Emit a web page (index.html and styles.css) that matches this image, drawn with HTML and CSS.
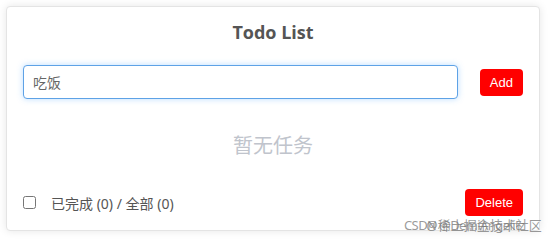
FILE: index.html
```html
<!DOCTYPE html>
<html lang="zh">
<head>
<meta charset="utf-8">
<title>Todo List</title>
<link rel="stylesheet" href="styles.css">
</head>
<body>
<div class="page">
  <div class="card">
    <h1 class="title">Todo List</h1>
    <div class="add-row">
      <input class="todo-input" type="text" value="吃饭">
      <button class="btn">Add</button>
    </div>
    <div class="empty">暂无任务</div>
    <div class="footer">
      <label class="summary">
        <input class="check" type="checkbox">
        <span>已完成 (0) / 全部 (0)</span>
      </label>
      <button class="btn">Delete</button>
    </div>
  </div>
  <div class="watermark">
    <span class="wm wm-a">CSDN @DemiAngelitz</span>
    <span class="wm wm-b">@稀土掘金技术社区</span>
  </div>
</div>
</body>
</html>
```

FILE: styles.css
```css
html, body {
  margin: 0;
  padding: 0;
  background: #ffffff;
}
body {
  font-family: "Noto Sans", "Noto Sans CJK SC", sans-serif;
}
.page {
  position: relative;
  width: 551px;
  height: 244px;
  padding: 6px 0 0 6px;
  box-sizing: border-box;
}
.card {
  width: 534px;
  box-sizing: border-box;
  border: 1px solid #e4e4e4;
  border-radius: 4px;
  background: #fff;
  box-shadow: 0 0 8px rgba(0, 0, 0, 0.1);
  padding: 13px 16px 14px 16px;
}
.title {
  margin: 0 0 21px;
  font-family: "Open Sans", "Noto Sans CJK SC", sans-serif;
  font-size: 18px;
  line-height: 24px;
  font-weight: 700;
  color: #555;
  text-align: center;
}
.add-row {
  display: flex;
  align-items: center;
  gap: 22px;
}
.todo-input {
  flex: 1;
  height: 34px;
  box-sizing: border-box;
  border: 1px solid #5ea2e6;
  border-radius: 4px;
  box-shadow: 0 0 6px rgba(64, 158, 255, 0.35);
  padding: 0 9px;
  font-family: "Noto Sans", "Noto Sans CJK SC", sans-serif;
  font-size: 14px;
  color: #666;
  outline: none;
}
.btn {
  height: 27px;
  padding: 0 10px;
  border: none;
  border-radius: 4px;
  background: #ff0000;
  color: #fff;
  font-family: "Liberation Sans", Arial, sans-serif;
  font-size: 13px;
  line-height: 27px;
  cursor: pointer;
}
.empty {
  margin: 32px 0 30px;
  font-family: "Noto Sans CJK SC", sans-serif;
  font-size: 20px;
  line-height: 28px;
  color: #c0c4cc;
  text-align: center;
}
.footer {
  display: flex;
  align-items: center;
  justify-content: space-between;
}
.summary {
  display: flex;
  align-items: center;
  gap: 15px;
  font-size: 14px;
  color: #555;
}
.check {
  width: 13px;
  height: 13px;
  margin: 0;
}
.watermark {
  position: absolute;
  left: 404px;
  top: 217px;
  width: 140px;
  height: 16px;
  pointer-events: none;
}
.wm {
  position: absolute;
  top: 0;
  font-family: "Noto Sans", "Noto Sans CJK SC", sans-serif;
  font-size: 13px;
  line-height: 16px;
  color: rgba(120, 120, 120, 0.75);
  white-space: nowrap;
}
.wm-a { left: 0; letter-spacing: -0.6px; }
.wm-b { left: 22px; }
```
